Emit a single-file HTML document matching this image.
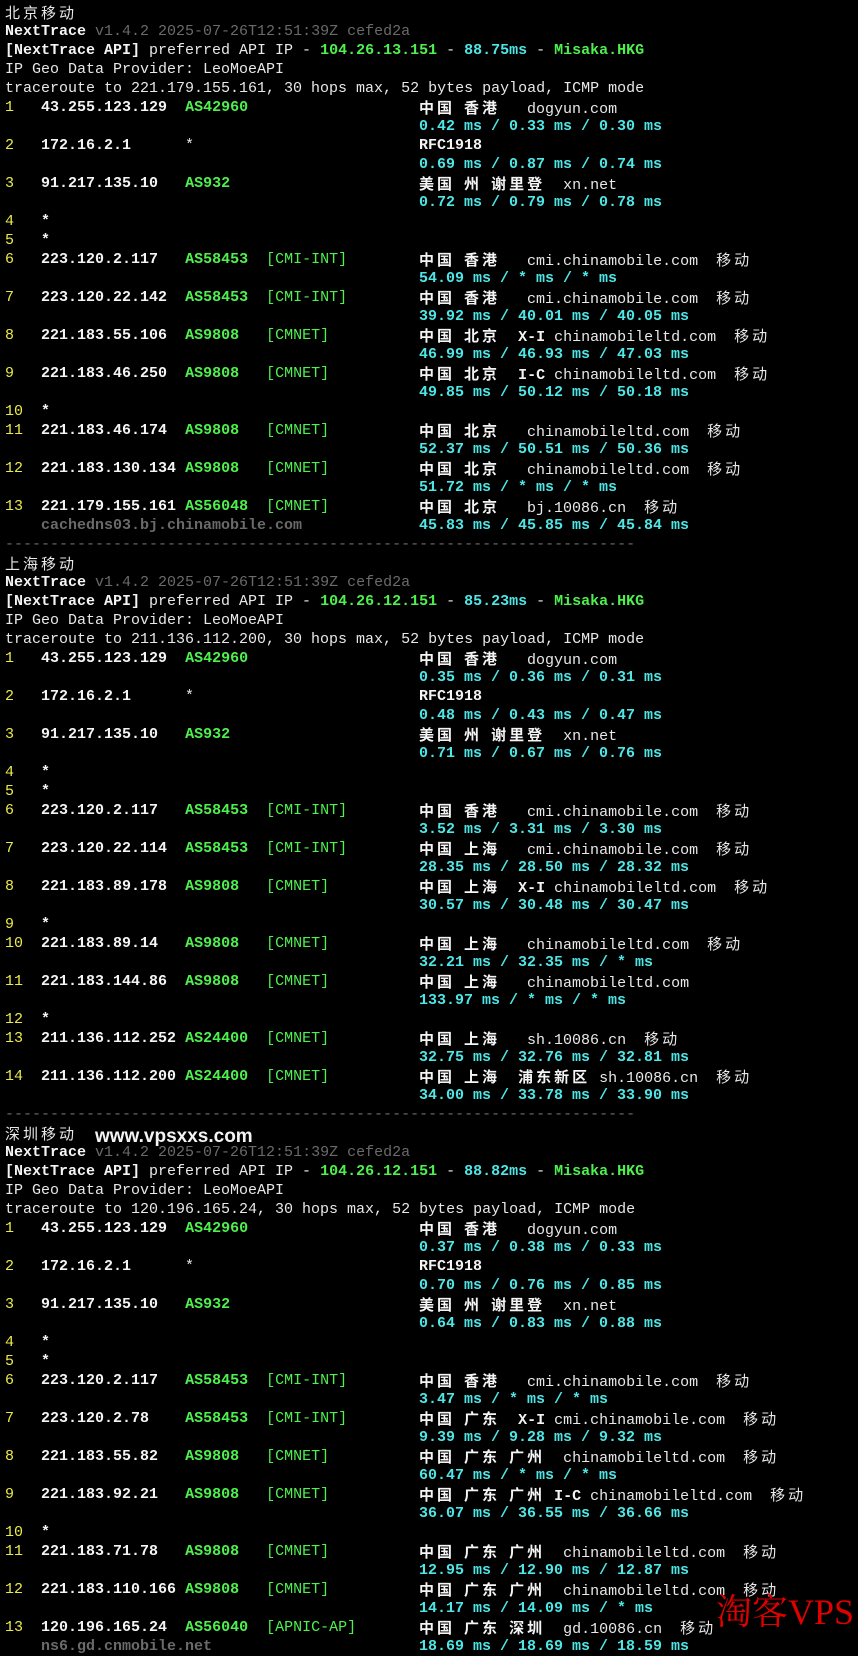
<!DOCTYPE html>
<html><head><meta charset="utf-8"><style>
html,body{margin:0;padding:0;background:#000;}
body{width:858px;height:1651px;overflow:hidden;position:relative;font-family:"Liberation Mono","Noto Sans CJK SC",monospace;font-size:15px;color:#e8e8e8;}
#t{padding:3px 0 0 5px;}
#t div{height:19px;line-height:19px;white-space:pre;position:relative;}
.k{font-family:"Noto Sans CJK SC",sans-serif;letter-spacing:3px;font-size:15px;}
.y{color:#eaea4c;}
.w{color:#f4f4f4;font-weight:bold;}
.g{color:#4ef04e;font-weight:bold;}
.gn{color:#4ef04e;}
.c{color:#4ee6e6;font-weight:bold;}
.gr{color:#6a6a6a;}
.grb{color:#6a6a6a;font-weight:bold;}
.r{position:absolute;left:414px;top:0;}
.b{font-weight:bold;color:#f4f4f4;}
.wm{position:absolute;left:95px;top:1126px;font-family:"Liberation Sans",sans-serif;font-weight:bold;font-size:19px;color:#f4f4f4;}
.red{position:absolute;left:716px;top:1594px;font-family:"Liberation Serif","Noto Serif CJK SC",serif;font-size:36px;color:#e00000;line-height:1;}
</style></head><body>
<div id="t">
<div><span class="k">北京移动</span></div>
<div><span class="w">NextTrace</span> <span class="gr">v1.4.2 2025-07-26T12:51:39Z cefed2a</span></div>
<div><span class="w">[NextTrace API]</span> preferred API IP - <span class="g">104.26.13.151</span> - <span class="c">88.75ms</span> - <span class="g">Misaka.HKG</span></div>
<div>IP Geo Data Provider: LeoMoeAPI</div>
<div>traceroute to 221.179.155.161, 30 hops max, 52 bytes payload, ICMP mode</div>
<div><span class="y">1</span>   <span class="w">43.255.123.129</span>  <span class="g">AS42960</span><span class="r"><span class="b k">中国</span> <span class="b k">香港</span>   dogyun.com</span></div>
<div><span class="r c">0.42 ms / 0.33 ms / 0.30 ms</span></div>
<div><span class="y">2</span>   <span class="w">172.16.2.1</span>      *<span class="r b">RFC1918</span></div>
<div><span class="r c">0.69 ms / 0.87 ms / 0.74 ms</span></div>
<div><span class="y">3</span>   <span class="w">91.217.135.10</span>   <span class="g">AS932</span><span class="r"><span class="b k">美国</span> <span class="b k">州</span> <span class="b k">谢里登</span>  xn.net</span></div>
<div><span class="r c">0.72 ms / 0.79 ms / 0.78 ms</span></div>
<div><span class="y">4</span>   <span class="w">*</span></div>
<div><span class="y">5</span>   <span class="w">*</span></div>
<div><span class="y">6</span>   <span class="w">223.120.2.117</span>   <span class="g">AS58453</span>  <span class="gn">[CMI-INT]</span><span class="r"><span class="b k">中国</span> <span class="b k">香港</span>   cmi.chinamobile.com  <span class="k">移动</span></span></div>
<div><span class="r c">54.09 ms / * ms / * ms</span></div>
<div><span class="y">7</span>   <span class="w">223.120.22.142</span>  <span class="g">AS58453</span>  <span class="gn">[CMI-INT]</span><span class="r"><span class="b k">中国</span> <span class="b k">香港</span>   cmi.chinamobile.com  <span class="k">移动</span></span></div>
<div><span class="r c">39.92 ms / 40.01 ms / 40.05 ms</span></div>
<div><span class="y">8</span>   <span class="w">221.183.55.106</span>  <span class="g">AS9808</span>   <span class="gn">[CMNET]</span><span class="r"><span class="b k">中国</span> <span class="b k">北京</span>  <span class="b">X-I</span> chinamobileltd.com  <span class="k">移动</span></span></div>
<div><span class="r c">46.99 ms / 46.93 ms / 47.03 ms</span></div>
<div><span class="y">9</span>   <span class="w">221.183.46.250</span>  <span class="g">AS9808</span>   <span class="gn">[CMNET]</span><span class="r"><span class="b k">中国</span> <span class="b k">北京</span>  <span class="b">I-C</span> chinamobileltd.com  <span class="k">移动</span></span></div>
<div><span class="r c">49.85 ms / 50.12 ms / 50.18 ms</span></div>
<div><span class="y">10</span>  <span class="w">*</span></div>
<div><span class="y">11</span>  <span class="w">221.183.46.174</span>  <span class="g">AS9808</span>   <span class="gn">[CMNET]</span><span class="r"><span class="b k">中国</span> <span class="b k">北京</span>   chinamobileltd.com  <span class="k">移动</span></span></div>
<div><span class="r c">52.37 ms / 50.51 ms / 50.36 ms</span></div>
<div><span class="y">12</span>  <span class="w">221.183.130.134</span> <span class="g">AS9808</span>   <span class="gn">[CMNET]</span><span class="r"><span class="b k">中国</span> <span class="b k">北京</span>   chinamobileltd.com  <span class="k">移动</span></span></div>
<div><span class="r c">51.72 ms / * ms / * ms</span></div>
<div><span class="y">13</span>  <span class="w">221.179.155.161</span> <span class="g">AS56048</span>  <span class="gn">[CMNET]</span><span class="r"><span class="b k">中国</span> <span class="b k">北京</span>   bj.10086.cn  <span class="k">移动</span></span></div>
<div>    <span class="grb">cachedns03.bj.chinamobile.com</span><span class="r c">45.83 ms / 45.85 ms / 45.84 ms</span></div>
<div class="gr">----------------------------------------------------------------------</div>
<div><span class="k">上海移动</span></div>
<div><span class="w">NextTrace</span> <span class="gr">v1.4.2 2025-07-26T12:51:39Z cefed2a</span></div>
<div><span class="w">[NextTrace API]</span> preferred API IP - <span class="g">104.26.12.151</span> - <span class="c">85.23ms</span> - <span class="g">Misaka.HKG</span></div>
<div>IP Geo Data Provider: LeoMoeAPI</div>
<div>traceroute to 211.136.112.200, 30 hops max, 52 bytes payload, ICMP mode</div>
<div><span class="y">1</span>   <span class="w">43.255.123.129</span>  <span class="g">AS42960</span><span class="r"><span class="b k">中国</span> <span class="b k">香港</span>   dogyun.com</span></div>
<div><span class="r c">0.35 ms / 0.36 ms / 0.31 ms</span></div>
<div><span class="y">2</span>   <span class="w">172.16.2.1</span>      *<span class="r b">RFC1918</span></div>
<div><span class="r c">0.48 ms / 0.43 ms / 0.47 ms</span></div>
<div><span class="y">3</span>   <span class="w">91.217.135.10</span>   <span class="g">AS932</span><span class="r"><span class="b k">美国</span> <span class="b k">州</span> <span class="b k">谢里登</span>  xn.net</span></div>
<div><span class="r c">0.71 ms / 0.67 ms / 0.76 ms</span></div>
<div><span class="y">4</span>   <span class="w">*</span></div>
<div><span class="y">5</span>   <span class="w">*</span></div>
<div><span class="y">6</span>   <span class="w">223.120.2.117</span>   <span class="g">AS58453</span>  <span class="gn">[CMI-INT]</span><span class="r"><span class="b k">中国</span> <span class="b k">香港</span>   cmi.chinamobile.com  <span class="k">移动</span></span></div>
<div><span class="r c">3.52 ms / 3.31 ms / 3.30 ms</span></div>
<div><span class="y">7</span>   <span class="w">223.120.22.114</span>  <span class="g">AS58453</span>  <span class="gn">[CMI-INT]</span><span class="r"><span class="b k">中国</span> <span class="b k">上海</span>   cmi.chinamobile.com  <span class="k">移动</span></span></div>
<div><span class="r c">28.35 ms / 28.50 ms / 28.32 ms</span></div>
<div><span class="y">8</span>   <span class="w">221.183.89.178</span>  <span class="g">AS9808</span>   <span class="gn">[CMNET]</span><span class="r"><span class="b k">中国</span> <span class="b k">上海</span>  <span class="b">X-I</span> chinamobileltd.com  <span class="k">移动</span></span></div>
<div><span class="r c">30.57 ms / 30.48 ms / 30.47 ms</span></div>
<div><span class="y">9</span>   <span class="w">*</span></div>
<div><span class="y">10</span>  <span class="w">221.183.89.14</span>   <span class="g">AS9808</span>   <span class="gn">[CMNET]</span><span class="r"><span class="b k">中国</span> <span class="b k">上海</span>   chinamobileltd.com  <span class="k">移动</span></span></div>
<div><span class="r c">32.21 ms / 32.35 ms / * ms</span></div>
<div><span class="y">11</span>  <span class="w">221.183.144.86</span>  <span class="g">AS9808</span>   <span class="gn">[CMNET]</span><span class="r"><span class="b k">中国</span> <span class="b k">上海</span>   chinamobileltd.com</span></div>
<div><span class="r c">133.97 ms / * ms / * ms</span></div>
<div><span class="y">12</span>  <span class="w">*</span></div>
<div><span class="y">13</span>  <span class="w">211.136.112.252</span> <span class="g">AS24400</span>  <span class="gn">[CMNET]</span><span class="r"><span class="b k">中国</span> <span class="b k">上海</span>   sh.10086.cn  <span class="k">移动</span></span></div>
<div><span class="r c">32.75 ms / 32.76 ms / 32.81 ms</span></div>
<div><span class="y">14</span>  <span class="w">211.136.112.200</span> <span class="g">AS24400</span>  <span class="gn">[CMNET]</span><span class="r"><span class="b k">中国</span> <span class="b k">上海</span>  <span class="b k">浦东新区</span> sh.10086.cn  <span class="k">移动</span></span></div>
<div><span class="r c">34.00 ms / 33.78 ms / 33.90 ms</span></div>
<div class="gr">----------------------------------------------------------------------</div>
<div><span class="k">深圳移动</span></div>
<div><span class="w">NextTrace</span> <span class="gr">v1.4.2 2025-07-26T12:51:39Z cefed2a</span></div>
<div><span class="w">[NextTrace API]</span> preferred API IP - <span class="g">104.26.12.151</span> - <span class="c">88.82ms</span> - <span class="g">Misaka.HKG</span></div>
<div>IP Geo Data Provider: LeoMoeAPI</div>
<div>traceroute to 120.196.165.24, 30 hops max, 52 bytes payload, ICMP mode</div>
<div><span class="y">1</span>   <span class="w">43.255.123.129</span>  <span class="g">AS42960</span><span class="r"><span class="b k">中国</span> <span class="b k">香港</span>   dogyun.com</span></div>
<div><span class="r c">0.37 ms / 0.38 ms / 0.33 ms</span></div>
<div><span class="y">2</span>   <span class="w">172.16.2.1</span>      *<span class="r b">RFC1918</span></div>
<div><span class="r c">0.70 ms / 0.76 ms / 0.85 ms</span></div>
<div><span class="y">3</span>   <span class="w">91.217.135.10</span>   <span class="g">AS932</span><span class="r"><span class="b k">美国</span> <span class="b k">州</span> <span class="b k">谢里登</span>  xn.net</span></div>
<div><span class="r c">0.64 ms / 0.83 ms / 0.88 ms</span></div>
<div><span class="y">4</span>   <span class="w">*</span></div>
<div><span class="y">5</span>   <span class="w">*</span></div>
<div><span class="y">6</span>   <span class="w">223.120.2.117</span>   <span class="g">AS58453</span>  <span class="gn">[CMI-INT]</span><span class="r"><span class="b k">中国</span> <span class="b k">香港</span>   cmi.chinamobile.com  <span class="k">移动</span></span></div>
<div><span class="r c">3.47 ms / * ms / * ms</span></div>
<div><span class="y">7</span>   <span class="w">223.120.2.78</span>    <span class="g">AS58453</span>  <span class="gn">[CMI-INT]</span><span class="r"><span class="b k">中国</span> <span class="b k">广东</span>  <span class="b">X-I</span> cmi.chinamobile.com  <span class="k">移动</span></span></div>
<div><span class="r c">9.39 ms / 9.28 ms / 9.32 ms</span></div>
<div><span class="y">8</span>   <span class="w">221.183.55.82</span>   <span class="g">AS9808</span>   <span class="gn">[CMNET]</span><span class="r"><span class="b k">中国</span> <span class="b k">广东</span> <span class="b k">广州</span>  chinamobileltd.com  <span class="k">移动</span></span></div>
<div><span class="r c">60.47 ms / * ms / * ms</span></div>
<div><span class="y">9</span>   <span class="w">221.183.92.21</span>   <span class="g">AS9808</span>   <span class="gn">[CMNET]</span><span class="r"><span class="b k">中国</span> <span class="b k">广东</span> <span class="b k">广州</span> <span class="b">I-C</span> chinamobileltd.com  <span class="k">移动</span></span></div>
<div><span class="r c">36.07 ms / 36.55 ms / 36.66 ms</span></div>
<div><span class="y">10</span>  <span class="w">*</span></div>
<div><span class="y">11</span>  <span class="w">221.183.71.78</span>   <span class="g">AS9808</span>   <span class="gn">[CMNET]</span><span class="r"><span class="b k">中国</span> <span class="b k">广东</span> <span class="b k">广州</span>  chinamobileltd.com  <span class="k">移动</span></span></div>
<div><span class="r c">12.95 ms / 12.90 ms / 12.87 ms</span></div>
<div><span class="y">12</span>  <span class="w">221.183.110.166</span> <span class="g">AS9808</span>   <span class="gn">[CMNET]</span><span class="r"><span class="b k">中国</span> <span class="b k">广东</span> <span class="b k">广州</span>  chinamobileltd.com  <span class="k">移动</span></span></div>
<div><span class="r c">14.17 ms / 14.09 ms / * ms</span></div>
<div><span class="y">13</span>  <span class="w">120.196.165.24</span>  <span class="g">AS56040</span>  <span class="gn">[APNIC-AP]</span><span class="r"><span class="b k">中国</span> <span class="b k">广东</span> <span class="b k">深圳</span>  gd.10086.cn  <span class="k">移动</span></span></div>
<div>    <span class="grb">ns6.gd.cnmobile.net</span><span class="r c">18.69 ms / 18.69 ms / 18.59 ms</span></div>
</div>
<div class="wm">www.vpsxxs.com</div>
<div class="red">淘客VPS</div>
</body></html>
